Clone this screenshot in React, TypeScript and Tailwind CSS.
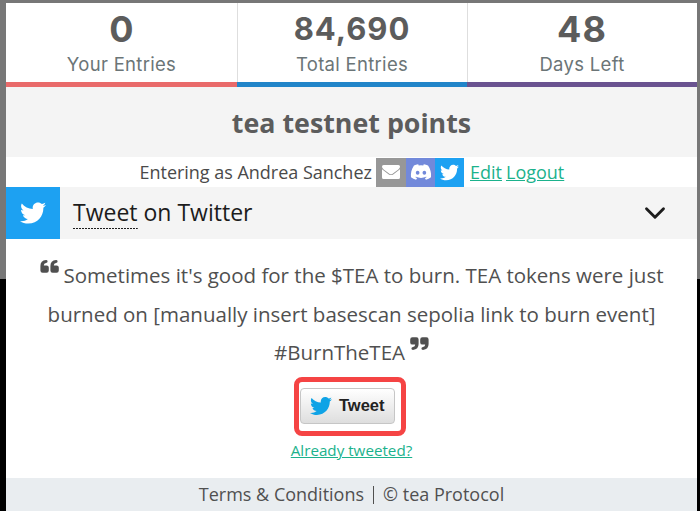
import { FiChevronDown } from "react-icons/fi";
import { FaDiscord, FaTwitter } from "react-icons/fa";

type StatProps = {
  value: string;
  label: string;
  className: string;
  valueClassName: string;
};

const Stat: React.FC<StatProps> = ({
  value,
  label,
  className,
  valueClassName,
}) => {
  return (
    <div
      className={`flex h-[84px] flex-col items-center border-b-[5px] font-['Inter',sans-serif] ${className}`}
    >
      <div
        className={`flex h-[50px] items-center font-bold text-[#5c5c5c] ${valueClassName}`}
      >
        {value}
      </div>
      <div className="text-[18.5px] leading-[22px] tracking-[0.3px] text-[#6b7577]">
        {label}
      </div>
    </div>
  );
};

const Stats = () => {
  return (
    <div className="grid grid-cols-[231px_230px_230px]">
      <Stat
        value="0"
        label="Your Entries"
        className="border-b-[#e96a6a]"
        valueClassName="pt-px text-[36px]"
      />
      <Stat
        value="84,690"
        label="Total Entries"
        className="border-b-[#2185c9] shadow-[inset_1px_0_#dedede]"
        valueClassName="pt-0.5 text-[31px] tracking-[1px]"
      />
      <Stat
        value="48"
        label="Days Left"
        className="border-b-[#6a5390] shadow-[inset_1px_0_#dedede]"
        valueClassName="pt-px text-[36px] tracking-[1px]"
      />
    </div>
  );
};

const EnvelopeIcon = () => {
  return (
    <svg width="18" height="14" viewBox="0 0 18 14" fill="currentColor">
      <path d="M1.6 0h14.8Q18 0 18 1.6C18 3 17 4 16 4.8L10.6 8.7Q9 9.8 7.4 8.7L2 4.8C1 4 0 3 0 1.6Q0 0 1.6 0Z" />
      <path d="M0 4Q.5 4.7 1.3 5.3L6.8 9.4Q9 10.8 11.2 9.4L16.7 5.3Q17.5 4.7 18 4V12.4Q18 14 16.4 14H1.6Q0 14 0 12.4Z" />
    </svg>
  );
};

const QuoteIcon = ({ className }: { className: string }) => {
  return (
    <svg
      width="19"
      height="13"
      viewBox="0 0 19 13"
      fill="currentColor"
      className={className}
    >
      <path d="M8.8 7.6v3Q8.8 12.8 6.6 12.8H2.6Q.4 12.8 .4 10.6V6Q.4 .6 6 .1Q7.6 .1 7.6 1.5T6 3Q3.8 3.2 3.8 5.4H6.6Q8.8 5.4 8.8 7.6Z" />
      <path d="M18.8 7.6v3Q18.8 12.8 16.6 12.8H12.6Q10.4 12.8 10.4 10.6V6Q10.4 .6 16 .1Q17.6 .1 17.6 1.5T16 3Q13.8 3.2 13.8 5.4H16.6Q18.8 5.4 18.8 7.6Z" />
    </svg>
  );
};

const Account = () => {
  return (
    <div className="flex h-[30px] items-center pl-[133.5px] text-[18px] whitespace-nowrap text-[#4a4a4a]">
      <span className="w-[236.5px] tracking-[-0.02px]">
        Entering as Andrea Sanchez
      </span>
      <div className="mr-1.5 flex text-white">
        <span className="flex h-[29px] w-[30px] items-center justify-center bg-[#979797]">
          <EnvelopeIcon />
        </span>
        <span className="flex h-[29px] w-[29px] items-center justify-center bg-[#7289da]">
          <FaDiscord size={22} />
        </span>
        <span className="flex h-[29px] w-[29px] items-center justify-center bg-[#1da1f2]">
          <FaTwitter size={19} />
        </span>
      </div>
      <a className="mr-1 text-[#1bb28c] underline">Edit</a>
      <a className="text-[#1bb28c] underline">Logout</a>
    </div>
  );
};

const TweetHeader = () => {
  return (
    <div className="flex h-[52px] items-center bg-[#f4f4f4] text-[#1c1c1c]">
      <span className="flex h-full w-[54px] items-center justify-center bg-[#1da1f2] text-white">
        <FaTwitter size={26} />
      </span>
      <h2 className="-mt-0.5 ml-[13px] text-[23px] leading-[30px] whitespace-nowrap">
        <span className="bg-[repeating-linear-gradient(90deg,#1c1c1c_0_2px,transparent_2px_3px)] bg-[length:100%_1px] bg-bottom bg-no-repeat pb-px">
          Tweet
        </span>{" "}
        on Twitter
      </h2>
      <FiChevronDown size={34} strokeWidth={2} className="mr-[25px] ml-auto" />
    </div>
  );
};

const TweetBody = () => {
  return (
    <div className="flex h-[239px] flex-col items-center pt-[17px]">
      <div className="w-full text-center text-[20.5px] leading-[38.5px] whitespace-nowrap text-[#505050]">
        <p>
          <QuoteIcon className="relative -top-[11px] mr-[5px] inline" />
          Sometimes it's good for the $TEA to burn. TEA tokens were just
        </p>
        <p>burned on [manually insert basescan sepolia link to burn event]</p>
        <p>
          #BurnTheTEA
          <QuoteIcon className="relative -top-[11px] ml-[5px] inline rotate-180" />
        </p>
      </div>
      <div className="mt-[5px] -ml-[3px] h-[59px] w-[112px] rounded-lg border-[5px] border-[#f54444] pt-[6px] pl-[1px]">
        <button className="flex h-9 w-[95px] items-center rounded-[4px] border border-[#c6c6c6] bg-linear-to-b from-white to-[#dedede] pl-[9px] font-['Liberation_Sans',Arial,sans-serif] text-[16.5px] font-bold text-[#222]">
          <FaTwitter size={22} className="mr-[7px] shrink-0 text-[#0fa3e6]" />
          Tweet
        </button>
      </div>
      <a className="mt-0.5 text-[15.2px] leading-6 text-[#1bb28c] underline">
        Already tweeted?
      </a>
    </div>
  );
};

export default function App() {
  return (
    <div className="h-[511px] w-[700px] overflow-hidden bg-linear-to-b from-[#777] from-[279px] to-black to-[279px] pt-[3px] pl-1.5 font-['Open_Sans',sans-serif]">
      <main className="w-[691px] bg-white">
        <Stats />
        <h1 className="flex h-[70px] items-center justify-center bg-[#f4f4f4] pt-0.5 text-[26.8px] font-bold text-[#5c5c5c]">
          tea testnet points
        </h1>
        <Account />
        <TweetHeader />
        <TweetBody />
        <footer className="flex h-[33px] items-center justify-center bg-[#e9edf0] text-[18px] text-[#505050]">
          <span>Terms &amp; Conditions</span>
          <span className="mx-[9px] h-[18px] w-px bg-[#505050]" />
          <span>© tea Protocol</span>
        </footer>
      </main>
    </div>
  );
}
